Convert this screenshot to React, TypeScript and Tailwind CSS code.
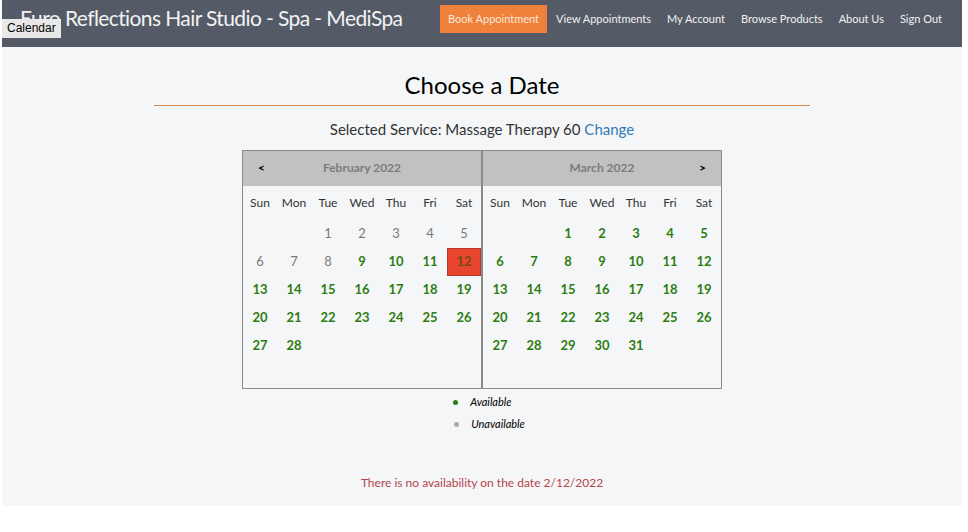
import React from 'react';

type Day = { n: number; available: boolean; selected?: boolean } | null;

const WEEKDAYS = ['Sun', 'Mon', 'Tue', 'Wed', 'Thu', 'Fri', 'Sat'];

function buildMonth(offset: number, total: number, isAvailable: (n: number) => boolean, selected?: number): Day[] {
  const cells: Day[] = [];
  for (let i = 0; i < offset; i++) cells.push(null);
  for (let n = 1; n <= total; n++) cells.push({ n, available: isAvailable(n), selected: n === selected });
  while (cells.length < 42) cells.push(null);
  return cells;
}

const february = buildMonth(2, 28, (n) => n >= 9 && n !== 12, 12);
const march = buildMonth(2, 31, () => true);

function MonthPane({ title, days, prev, next }: { title: string; days: Day[]; prev?: boolean; next?: boolean }) {
  return (
    <div className="w-[240px] border border-[#8a8a8a]">
      <div className="h-[35px] bg-[#c1c1c1] flex items-center justify-between px-[15px] text-[12px]">
        <span className="w-3 font-bold text-black">{prev ? '<' : ''}</span>
        <span className="font-bold text-[#7c7c7c]">{title}</span>
        <span className="w-3 text-right font-bold text-black">{next ? '>' : ''}</span>
      </div>
      <div className="grid grid-cols-7">
        {WEEKDAYS.map((d) => (
          <div key={d} className="h-[34px] flex items-center justify-center text-[12px] text-[#333]">
            {d}
          </div>
        ))}
        {days.map((d, i) => (
          <div key={i} className="h-[28px] flex items-center justify-center text-[13px]">
            {d &&
              (d.selected ? (
                <span className="w-full h-full flex items-center justify-center bg-[#e8452f] border border-[#b8392a] font-bold text-[#7a4a10]">
                  {d.n}
                </span>
              ) : (
                <span className={d.available ? 'font-bold text-[#2e7d12]' : 'text-[#7a7a7a]'}>{d.n}</span>
              ))}
          </div>
        ))}
      </div>
    </div>
  );
}

export default function App() {
  const nav = ['View Appointments', 'My Account', 'Browse Products', 'About Us', 'Sign Out'];
  return (
    <div className="min-h-[532px] bg-white font-['Lato','Open_Sans',sans-serif]">
      <div className="ml-[2px] w-[960px] h-[506px] bg-[#f5f6f8] flex flex-col">
        <header className="relative h-[47px] bg-[#545b66] flex items-start">
          <h1 className="shrink-0 ml-[18px] mt-[3px] text-[21px] tracking-[-0.6px] leading-[30px] text-[#f2f2f2] whitespace-nowrap">
            Euro Reflections Hair Studio - Spa - MediSpa
          </h1>
          <span className="absolute left-0 top-[19px] h-[19px] px-[5px] bg-[#e8e8e8] text-black text-[12px] leading-[19px] font-['Liberation_Sans',sans-serif]">
            Calendar
          </span>
          <nav className="ml-auto mr-[12px] mt-[5px] flex items-center whitespace-nowrap text-[11px] text-[#f0f0f0]">
            <a className="h-[28px] px-[8px] mr-[1px] flex items-center bg-[#f0813a] text-[#fbe9dc]">Book Appointment</a>
            {nav.map((item) => (
              <a key={item} className="h-[28px] px-[8px] flex items-center">
                {item}
              </a>
            ))}
          </nav>
        </header>

        <main className="flex flex-col items-center">
          <h2 className="pt-[22px] text-[24px] leading-[32px] text-black">Choose a Date</h2>
          <div className="mt-[4px] w-[656px] h-px bg-[#d98a55]" />
          <p className="mt-[12px] text-[15px] text-[#333]">
            Selected Service: Massage Therapy 60 <a className="text-[#337ab7]">Change</a>
          </p>
          <div className="mt-[9px] flex">
            <MonthPane title="February 2022" days={february} prev />
            <MonthPane title="March 2022" days={march} next />
          </div>
          <ul className="mt-[3px] pl-[14px] text-[11px] italic text-black">
            <li className="h-[22px] flex items-center gap-[12px]">
              <span className="w-[5px] h-[5px] rounded-full bg-[#2e7d12]" />
              Available
            </li>
            <li className="h-[22px] flex items-center gap-[12px] pl-[1px]">
              <span className="w-[5px] h-[5px] rounded-full bg-[#aaaaaa]" />
              Unavailable
            </li>
          </ul>
          <p className="mt-[38px] text-[12px] text-[#b5454a]">There is no availability on the date 2/12/2022</p>
        </main>
      </div>
    </div>
  );
}
